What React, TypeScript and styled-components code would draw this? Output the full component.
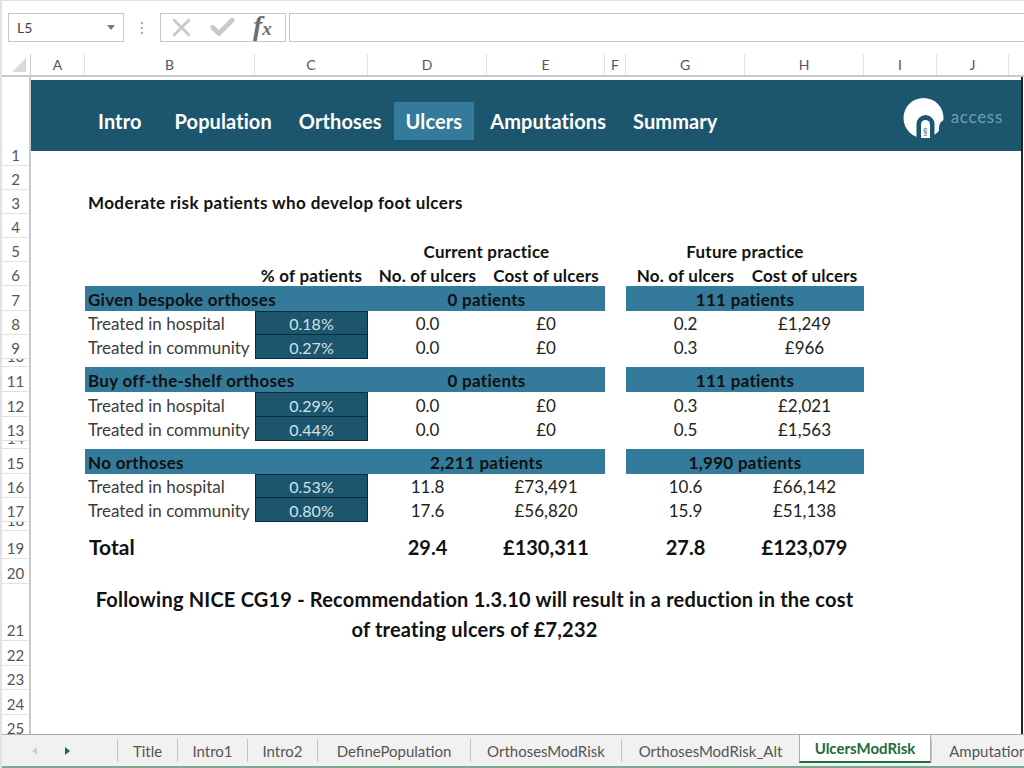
import { Fragment } from "react";
import styled, { createGlobalStyle } from "styled-components";
import { X, Check } from "lucide-react";

const columns = [
  { name: "A", width: 54 },
  { name: "B", width: 170 },
  { name: "C", width: 113 },
  { name: "D", width: 119 },
  { name: "E", width: 118 },
  { name: "F", width: 21 },
  { name: "G", width: 119 },
  { name: "H", width: 119 },
  { name: "I", width: 73 },
  { name: "J", width: 72 },
];

const rowHeights = [89, 24, 24, 24, 24, 24, 25, 24, 24, 8, 25, 25, 24, 8, 25, 24, 24, 9, 28, 25, 57, 25, 24, 25, 24];

const navItems = [
  { label: "Intro", gap: 55 },
  { label: "Population", gap: 9 },
  { label: "Orthoses", gap: 3 },
  { label: "Ulcers", gap: 0, active: true },
  { label: "Amputations", gap: 4 },
  { label: "Summary", gap: 3 },
];

const sections = [
  {
    row: 7,
    title: "Given bespoke orthoses",
    current: "0 patients",
    future: "111 patients",
    rows: [
      { label: "Treated in hospital", pct: "0.18%", a: "0.0", b: "£0", c: "0.2", d: "£1,249" },
      { label: "Treated in community", pct: "0.27%", a: "0.0", b: "£0", c: "0.3", d: "£966" },
    ],
  },
  {
    row: 11,
    title: "Buy off-the-shelf orthoses",
    current: "0 patients",
    future: "111 patients",
    rows: [
      { label: "Treated in hospital", pct: "0.29%", a: "0.0", b: "£0", c: "0.3", d: "£2,021" },
      { label: "Treated in community", pct: "0.44%", a: "0.0", b: "£0", c: "0.5", d: "£1,563" },
    ],
  },
  {
    row: 15,
    title: "No orthoses",
    current: "2,211 patients",
    future: "1,990 patients",
    rows: [
      { label: "Treated in hospital", pct: "0.53%", a: "11.8", b: "£73,491", c: "10.6", d: "£66,142" },
      { label: "Treated in community", pct: "0.80%", a: "17.6", b: "£56,820", c: "15.9", d: "£51,138" },
    ],
  },
];

const tabs = [
  { label: "Title", width: 60 },
  { label: "Intro1", width: 70 },
  { label: "Intro2", width: 70 },
  { label: "DefinePopulation", width: 153 },
  { label: "OrthosesModRisk", width: 151 },
  { label: "OrthosesModRisk_Alt", width: 178 },
  { label: "UlcersModRisk", width: 132, active: true },
  { label: "Amputations", width: 120 },
];

export default function App() {
  return (
    <>
      <GlobalStyle />
      <Page>
        <FormulaBar>
          <NameBox>
            L5
            <Caret />
          </NameBox>
          <Grip>
            <i />
            <i />
            <i />
          </Grip>
          <ActionBox>
            <X size={29} strokeWidth={2.4} color="#c9c9c9" />
            <Check size={29} strokeWidth={4} color="#c9c9c9" />
            <FxMark>
              f<small>x</small>
            </FxMark>
          </ActionBox>
          <FormulaInput />
        </FormulaBar>

        <ColumnHeaders>
          <Corner>
            <svg width="14" height="14" viewBox="0 0 14 14">
              <path d="M14 0V14H0Z" fill="#d9d9d9" />
            </svg>
          </Corner>
          {columns.map((c) => (
            <ColumnHeader key={c.name} $width={c.width}>
              {c.name}
            </ColumnHeader>
          ))}
        </ColumnHeaders>

        <SheetArea>
          <RowHeaders>
            {rowHeights.map((h, i) => (
              <RowHeader key={i} $height={h}>
                {i + 1}
              </RowHeader>
            ))}
          </RowHeaders>

          <Sheet>
            <Banner>
              <Nav>
                {navItems.map((n) => (
                  <NavItem key={n.label} $gap={n.gap} $active={n.active}>
                    {n.label}
                  </NavItem>
                ))}
              </Nav>
              <Logo>
                <svg width="46" height="44" viewBox="0 0 46 44">
                  <circle cx="21.5" cy="22" r="20" fill="#fff" />
                  <path d="M14.5 44V28a9 9 0 0 1 18 0V44Z" fill="#1b566e" />
                  <path d="M37 44V31q0-6 9-9V44Z" fill="#1b566e" />
                  <path d="M19 42V28.500a4.500 4.500 0 0 1 9 0V42Z" fill="#fff" />
                  <text
                    x="0"
                    y="0"
                    fontSize="5"
                    fontFamily="Liberation Sans, sans-serif"
                    fill="#1b566e"
                    transform="translate(25 40) rotate(-90)"
                  >
                    teth
                  </text>
                </svg>
                <LogoText>access</LogoText>
              </Logo>
            </Banner>

            <Title $row={3} $col="2 / 6">
              Moderate risk patients who develop foot ulcers
            </Title>

            <HeadCell $row={5} $col="4 / 6">Current practice</HeadCell>
            <HeadCell $row={5} $col="7 / 9">Future practice</HeadCell>
            <HeadCell $row={6} $col="3">% of patients</HeadCell>
            <HeadCell $row={6} $col="4">No. of ulcers</HeadCell>
            <HeadCell $row={6} $col="5">Cost of ulcers</HeadCell>
            <HeadCell $row={6} $col="7">No. of ulcers</HeadCell>
            <HeadCell $row={6} $col="8">Cost of ulcers</HeadCell>

            {sections.map((s) => (
              <Section key={s.row} {...s} />
            ))}

            <TotalLabel $row={19} $col="2">Total</TotalLabel>
            <TotalValue $row={19} $col="4">29.4</TotalValue>
            <TotalValue $row={19} $col="5">£130,311</TotalValue>
            <TotalValue $row={19} $col="7">27.8</TotalValue>
            <TotalValue $row={19} $col="8">£123,079</TotalValue>

            <Conclusion>
              Following NICE CG19 - Recommendation 1.3.10 will result in a reduction in the cost of
              treating ulcers of £7,232
            </Conclusion>
          </Sheet>
        </SheetArea>

        <TabBar>
          <TabArrows>
            <svg width="5" height="8" viewBox="0 0 5 8">
              <path d="M5 0V8L0 4Z" fill="#cfcfcf" />
            </svg>
            <svg width="5" height="8" viewBox="0 0 5 8">
              <path d="M0 0V8L5 4Z" fill="#1e6b3c" />
            </svg>
          </TabArrows>
          {tabs.map((t) => (
            <Tab key={t.label} $width={t.width} $active={t.active}>
              {t.label}
            </Tab>
          ))}
        </TabBar>
        <StatusStrip />
      </Page>
    </>
  );
}

type SectionProps = (typeof sections)[number];

const Section = ({ row, title, current, future, rows }: SectionProps) => (
  <>
    <BandLabel $row={row} $col="2 / 4">{title}</BandLabel>
    <BandCell $row={row} $col="4 / 6">{current}</BandCell>
    <BandCell $row={row} $col="7 / 9">{future}</BandCell>
    {rows.map((r, i) => (
      <Fragment key={r.label}>
        <RowLabel $row={row + i + 1} $col="2">{r.label}</RowLabel>
        <InputCell $row={row + i + 1} $col="3" $joined={i > 0}>{r.pct}</InputCell>
        <ValueCell $row={row + i + 1} $col="4">{r.a}</ValueCell>
        <ValueCell $row={row + i + 1} $col="5">{r.b}</ValueCell>
        <ValueCell $row={row + i + 1} $col="7">{r.c}</ValueCell>
        <ValueCell $row={row + i + 1} $col="8">{r.d}</ValueCell>
      </Fragment>
    ))}
  </>
);

const GlobalStyle = createGlobalStyle`
  html, body {
    margin: 0;
    padding: 0;
    background: #fff;
  }
  body {
    font-family: Lato, "Open Sans", sans-serif;
    color: #222;
  }
`;

const Page = styled.div`
  width: 1024px;
  height: 768px;
  overflow: hidden;
  display: flex;
  flex-direction: column;
  box-sizing: border-box;
  border-top: 1px solid #e2e2e2;
  border-left: 2px solid #e2e2e2;
`;

const FormulaBar = styled.div`
  height: 53px;
  flex: none;
  box-sizing: border-box;
  padding: 12px 0 12px 6px;
  display: flex;
  align-items: stretch;
`;

const NameBox = styled.div`
  width: 116px;
  box-sizing: border-box;
  border: 1px solid #c6c6c6;
  display: flex;
  align-items: center;
  justify-content: space-between;
  padding: 0 8px 0 8px;
  font-size: 14px;
  color: #444;
`;

const Caret = styled.span`
  width: 0;
  height: 0;
  border-left: 4px solid transparent;
  border-right: 4px solid transparent;
  border-top: 5px solid #777;
`;

const Grip = styled.div`
  width: 36px;
  display: flex;
  flex-direction: column;
  align-items: center;
  justify-content: center;
  gap: 3px;

  i {
    width: 2px;
    height: 2px;
    background: #aaa;
  }
`;

const ActionBox = styled.div`
  width: 126px;
  box-sizing: border-box;
  border: 1px solid #c6c6c6;
  display: flex;
  align-items: center;
  gap: 12px;
  padding-left: 6px;
`;

const FxMark = styled.span`
  font-family: "Liberation Serif", serif;
  font-style: italic;
  font-weight: bold;
  font-size: 28px;
  line-height: 1;
  margin: -3px 0 0 4px;
  color: #6e6e6e;

  small {
    font-size: 19px;
  }
`;

const FormulaInput = styled.div`
  flex: 1;
  margin-left: 3px;
  border: 1px solid #c6c6c6;
  border-right: none;
`;

const ColumnHeaders = styled.div`
  height: 23px;
  flex: none;
  box-sizing: border-box;
  display: flex;
  border-bottom: 2px solid #c9c9c9;
`;

const Corner = styled.div`
  width: 29px;
  flex: none;
  box-sizing: border-box;
  border-right: 1px solid #c9c9c9;
  display: flex;
  align-items: flex-end;
  justify-content: flex-end;
  padding: 0 4px 3px 0;
`;

const ColumnHeader = styled.div<{ $width: number }>`
  width: ${(p) => p.$width}px;
  flex: none;
  box-sizing: border-box;
  border-right: 1px solid #e2e2e2;
  display: flex;
  align-items: center;
  justify-content: center;
  font-size: 14px;
  color: #555;
`;

const SheetArea = styled.div`
  flex: 1;
  min-height: 0;
  display: flex;
  overflow: hidden;
`;

const RowHeaders = styled.div`
  width: 29px;
  flex: none;
  box-sizing: border-box;
  border-right: 2px solid #c9c9c9;
`;

const RowHeader = styled.div<{ $height: number }>`
  height: ${(p) => p.$height}px;
  box-sizing: border-box;
  border-bottom: 1px solid #e2e2e2;
  overflow: hidden;
  display: flex;
  align-items: flex-end;
  justify-content: center;
  padding-bottom: 1px;
  font-size: 15px;
  line-height: 17px;
  color: #555;
`;

const Sheet = styled.div`
  width: 990px;
  flex: none;
  box-sizing: content-box;
  border-right: 2px solid #222;
  display: grid;
  grid-template-columns: ${columns.map((c) => `${c.width}px`).join(" ")} 1fr;
  grid-template-rows: ${rowHeights.map((h) => `${h}px`).join(" ")};
`;

const Banner = styled.div`
  grid-row: 1;
  grid-column: 1 / -1;
  height: 71px;
  margin-top: 3px;
  background: #1b566e;
  display: flex;
  align-items: center;
  justify-content: space-between;
`;

const Nav = styled.nav`
  display: flex;
  align-items: center;
  margin-top: 11px;
`;

const NavItem = styled.a<{ $gap: number; $active?: boolean }>`
  margin-left: ${(p) => p.$gap}px;
  padding: 0 12px;
  height: 38px;
  display: flex;
  align-items: center;
  font-size: 20px;
  font-weight: 700;
  letter-spacing: 0.1px;
  color: #fff;
  background: ${(p) => (p.$active ? "#337a9b" : "transparent")};
`;

const Logo = styled.div`
  display: flex;
  align-items: center;
  margin: 5px 18px 0 0;

  svg {
    flex: none;
  }
`;

const LogoText = styled.span`
  font-size: 17px;
  letter-spacing: 0.7px;
  font-weight: 400;
  color: #6f9fb0;
  margin: -4px 0 0 3px;
`;

const Cell = styled.div<{ $row: number; $col: string }>`
  grid-row: ${(p) => p.$row};
  grid-column: ${(p) => p.$col};
  display: flex;
  align-items: center;
  justify-content: center;
  font-size: 17px;
  white-space: nowrap;
  min-width: 0;
`;

const Title = styled(Cell)`
  justify-content: flex-start;
  padding-left: 3px;
  font-weight: 700;
  letter-spacing: 0.4px;
  color: #111;
`;

const HeadCell = styled(Cell)`
  font-weight: 700;
  letter-spacing: 0.2px;
  color: #111;
  align-items: flex-end;
`;

const BandCell = styled(Cell)`
  background: #337a9b;
  padding-top: 1px;
  font-weight: 700;
  letter-spacing: 0.3px;
  color: #111;
`;

const BandLabel = styled(BandCell)`
  justify-content: flex-start;
  padding-left: 3px;
`;

const RowLabel = styled(Cell)`
  justify-content: flex-start;
  padding: 1px 0 0 3px;
  color: #3c3c3c;
`;

const InputCell = styled(Cell)<{ $joined?: boolean }>`
  box-sizing: border-box;
  background: #1b566e;
  border: 1px solid #0c2a38;
  border-top: ${(p) => (p.$joined ? "none" : "1px solid #0c2a38")};
  padding-top: 1px;
  font-size: 16px;
  color: #d3e0e6;
`;

const ValueCell = styled(Cell)`
  padding-top: 1px;
  color: #222;
`;

const TotalLabel = styled(Cell)`
  justify-content: flex-start;
  padding: 3px 0 0 4px;
  font-size: 21px;
  font-weight: 700;
  color: #111;
`;

const TotalValue = styled(Cell)`
  padding-top: 3px;
  font-size: 20px;
  font-weight: 700;
  color: #111;
`;

const Conclusion = styled.div`
  grid-row: 21;
  grid-column: 2 / 9;
  align-self: center;
  box-sizing: border-box;
  padding: 2px 8px 0;
  text-align: center;
  font-size: 20px;
  letter-spacing: 0.2px;
  line-height: 30px;
  font-weight: 700;
  color: #111;
`;

const TabBar = styled.div`
  height: 32px;
  flex: none;
  box-sizing: border-box;
  border-top: 1px solid #ababab;
  background: #f1f1f1;
  display: flex;
  align-items: stretch;
  overflow: hidden;
`;

const TabArrows = styled.div`
  width: 115px;
  flex: none;
  box-sizing: border-box;
  padding: 0 47px 0 30px;
  display: flex;
  align-items: center;
  justify-content: space-between;
`;

const Tab = styled.div<{ $width: number; $active?: boolean }>`
  width: ${(p) => p.$width}px;
  flex: none;
  box-sizing: border-box;
  display: flex;
  align-items: center;
  justify-content: center;
  white-space: nowrap;
  font-size: 15px;
  color: ${(p) => (p.$active ? "#1e6b3c" : "#555")};
  font-weight: ${(p) => (p.$active ? 700 : 400)};
  background: ${(p) => (p.$active ? "#fff" : "transparent")};
  border-left: ${(p) => (p.$active ? "1px solid #ababab" : "1px solid #c4c4c4")};
  border-right: ${(p) => (p.$active ? "1px solid #ababab" : "none")};
  border-bottom: ${(p) => (p.$active ? "2px solid #1e7145" : "none")};
  margin: ${(p) => (p.$active ? "-1px 0 3px" : "4px 0 4px")};
`;

const StatusStrip = styled.div`
  height: 2px;
  flex: none;
  background: #7aa98d;
`;
